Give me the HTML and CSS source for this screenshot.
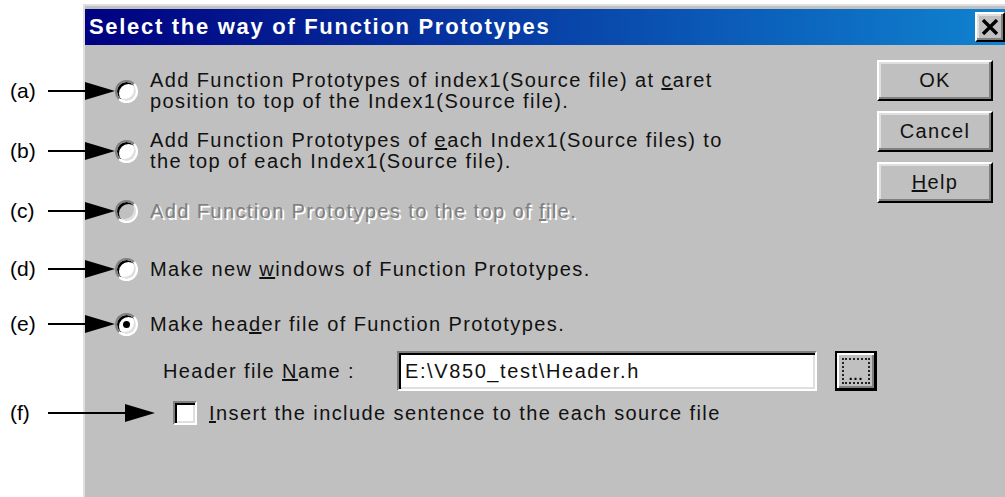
FILE: index.html
```html
<!DOCTYPE html>
<html lang="en">
<head>
    <meta charset="UTF-8">
    <title>Select the way of Function Prototypes</title>
    <link rel="stylesheet" href="styles.css">
</head>
<body>

    <div class="dialog">
        <div class="titlebar">
            <span class="title">Select the way of Function Prototypes</span>
            <span class="close">
                <svg width="18" height="16" viewBox="0 0 18 16"><path d="M2 1 L16 15 M16 1 L2 15" stroke="#000" stroke-width="3.4"/></svg>
            </span>
        </div>

        <div class="content">
            <div class="options">

                <!-- (a) -->
                <div class="opt">
                    <div class="callout"><span class="tag">(a)</span><svg class="arrow" width="67" height="20" viewBox="0 0 67 20"><line x1="0" y1="10" x2="40" y2="10" stroke="#000" stroke-width="2"/><polygon points="37,1 67,10 37,19"/></svg></div>
                    <span class="radio"></span>
                    <span class="opt-text">Add Function Prototypes of index1(Source file) at <u>c</u>aret<br>position to top of the Index1(Source file).</span>
                </div>

                <!-- (b) -->
                <div class="opt">
                    <div class="callout"><span class="tag">(b)</span><svg class="arrow" width="67" height="20" viewBox="0 0 67 20"><line x1="0" y1="10" x2="40" y2="10" stroke="#000" stroke-width="2"/><polygon points="37,1 67,10 37,19"/></svg></div>
                    <span class="radio"></span>
                    <span class="opt-text">Add Function Prototypes of <u>e</u>ach Index1(Source files) to<br>the top of each Index1(Source file).</span>
                </div>

                <!-- (c) -->
                <div class="opt">
                    <div class="callout"><span class="tag">(c)</span><svg class="arrow" width="67" height="20" viewBox="0 0 67 20"><line x1="0" y1="10" x2="40" y2="10" stroke="#000" stroke-width="2"/><polygon points="37,1 67,10 37,19"/></svg></div>
                    <span class="radio disabled"></span>
                    <span class="opt-text disabled">Add Function Prototypes to the top of <u>f</u>ile.</span>
                </div>

                <!-- (d) -->
                <div class="opt opt-d">
                    <div class="callout"><span class="tag">(d)</span><svg class="arrow" width="67" height="20" viewBox="0 0 67 20"><line x1="0" y1="10" x2="40" y2="10" stroke="#000" stroke-width="2"/><polygon points="37,1 67,10 37,19"/></svg></div>
                    <span class="radio"></span>
                    <span class="opt-text">Make new <u>w</u>indows of Function Prototypes.</span>
                </div>

                <!-- (e) -->
                <div class="opt opt-e">
                    <div class="callout"><span class="tag">(e)</span><svg class="arrow" width="67" height="20" viewBox="0 0 67 20"><line x1="0" y1="10" x2="40" y2="10" stroke="#000" stroke-width="2"/><polygon points="37,1 67,10 37,19"/></svg></div>
                    <span class="radio checked"></span>
                    <span class="opt-text">Make hea<u>d</u>er file of Function Prototypes.</span>
                </div>

                <div class="header-row">
                    <span class="header-label">Header file <u>N</u>ame :</span>
                    <div class="field">E:\V850_test\Header.h</div>
                    <div class="browse"><span class="focus"><span class="dots">...</span></span></div>
                </div>

                <!-- (f) -->
                <div class="opt opt-f">
                    <div class="callout long"><span class="tag">(f)</span><svg class="arrow" width="107" height="20" viewBox="0 0 107 20"><line x1="0" y1="10" x2="80" y2="10" stroke="#000" stroke-width="2"/><polygon points="77,1 107,10 77,19"/></svg></div>
                    <span class="check"></span>
                    <span class="opt-text"><u>I</u>nsert the include sentence to the each source file</span>
                </div>
            </div>

            <div class="buttons">
                <div class="btn">OK</div>
                <div class="btn">Cancel</div>
                <div class="btn"><u>H</u>elp</div>
            </div>
        </div>
    </div>

</body>
</html>
```

FILE: styles.css
```css
* {
  box-sizing: border-box;
}

body {
  margin: 0;
  background: #fff;
  overflow: hidden;
  font-family: "Liberation Sans", Arial, sans-serif;
  color: #000;
}

.dialog {
  margin: 4px 0 0 83px;
  width: 930px;
  height: 493px;
  background: #c0c0c0;
  border-top: 2px solid #dfdfdf;
  border-left: 2px solid #dfdfdf;
  padding-top: 3px;
  letter-spacing: 1.4px;
}

.titlebar {
  height: 36px;
  background: linear-gradient(to right, #000080, #1084d0);
  display: flex;
  align-items: center;
  justify-content: space-between;
  padding: 0 8px 0 4px;
}

.title {
  color: #fff;
  font-weight: bold;
  font-size: 22px;
  letter-spacing: 1.7px;
}

.close {
  width: 30px;
  height: 30px;
  background: #c0c0c0;
  border: 2px solid;
  border-color: #fff #000 #000 #fff;
  box-shadow: inset -2px -2px 0 #808080, inset 2px 2px 0 #dfdfdf;
  display: flex;
  align-items: center;
  justify-content: center;
}

.content {
  display: flex;
  padding-top: 15px;
}

.options {
  flex: 1;
  padding-top: 1px;
}

.opt {
  display: flex;
  align-items: center;
  height: 60px;
  margin-left: -85px;
  font-size: 20px;
}

.opt-d {
  height: 56px;
}

.opt-e {
  height: 54px;
}

.opt-f {
  height: 44px;
}

.callout {
  width: 115px;
  display: flex;
  align-items: center;
  flex-shrink: 0;
  letter-spacing: 0;
}

.callout.long {
  width: 173px;
}

.tag {
  width: 48px;
  padding-left: 10px;
  font-size: 21px;
}

.arrow {
  display: block;
}

.radio {
  width: 23px;
  height: 23px;
  border-radius: 50%;
  background: #fff;
  border: 2px solid;
  border-color: #808080 #fff #fff #808080;
  box-shadow: inset 2px 2px 0 #000, inset -2px -2px 0 #dfdfdf;
  position: relative;
  flex-shrink: 0;
  margin-right: 12px;
}

.radio.disabled {
  background: #c0c0c0;
}

.radio.checked::after {
  content: "";
  position: absolute;
  left: 6px;
  top: 6px;
  width: 7px;
  height: 7px;
  border-radius: 50%;
  background: #000;
}

.check {
  width: 24px;
  height: 24px;
  background: #fff;
  border: 2px solid;
  border-color: #808080 #fff #fff #808080;
  box-shadow: inset 2px 2px 0 #000, inset -2px -2px 0 #dfdfdf;
  flex-shrink: 0;
  margin-right: 12px;
}

.opt-text {
  line-height: 21px;
  color: #111;
}

.opt-text.disabled {
  color: #808080;
  text-shadow: 2px 2px 0 #fff;
}

.header-row {
  display: flex;
  align-items: center;
  height: 40px;
  padding-left: 78px;
  font-size: 20px;
  color: #111;
}

.header-label {
  width: 234px;
}

.field {
  width: 420px;
  height: 40px;
  background: #fff;
  border: 2px solid;
  border-color: #808080 #fff #fff #808080;
  box-shadow: inset 2px 2px 0 #000, inset -2px -2px 0 #dfdfdf;
  padding: 6px 6px;
  line-height: 24px;
  letter-spacing: 1.6px;
}

.browse {
  width: 42px;
  height: 40px;
  margin-left: 18px;
  border: solid #000;
  border-width: 2px 3px 3px 2px;
  box-shadow: inset 2px 2px 0 #fff, inset -2px -2px 0 #808080;
  padding: 5px 4px 4px 5px;
}

.focus {
  display: flex;
  align-items: flex-end;
  justify-content: center;
  height: 100%;
  border: 2px dotted #222;
}

.dots {
  font-size: 14px;
  line-height: 14px;
  letter-spacing: 1px;
  font-weight: bold;
  color: #000;
}

.buttons {
  width: 175px;
  margin-right: 20px;
  display: flex;
  flex-direction: column;
  gap: 10px;
}

.btn {
  height: 41px;
  border: 2px solid;
  border-color: #fff #000 #000 #fff;
  box-shadow: inset -2px -2px 0 #808080, inset 2px 2px 0 #dfdfdf;
  font-size: 20px;
  display: flex;
  align-items: center;
  justify-content: center;
  color: #111;
}
```
